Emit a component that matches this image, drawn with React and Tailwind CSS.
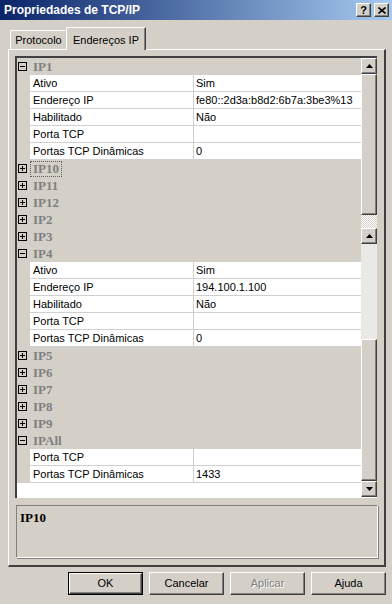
import React from "react";

const raised =
  "bg-[#d4d0c8] border-t border-l border-t-white border-l-white border-b border-r border-b-[#404040] border-r-[#404040] shadow-[inset_-1px_-1px_0_#808080]";

function Arrow({ up }) {
  return (
    <svg width="7" height="4" viewBox="0 0 7 4" className="block">
      {up ? <path d="M3.5 0 L7 4 L0 4 Z" fill="#000" /> : <path d="M0 0 L7 0 L3.5 4 Z" fill="#000" />}
    </svg>
  );
}

function ScrollBtn({ up }) {
  return (
    <div className={`h-[16px] w-[16px] flex items-center justify-center ${raised}`}>
      <Arrow up={up} />
    </div>
  );
}

function Box({ open }) {
  return (
    <div className="relative w-[9px] h-[9px] border border-black ml-[1px]">
      <div className="absolute left-[1px] top-[3px] w-[5px] h-px bg-black" />
      {!open && <div className="absolute left-[3px] top-[1px] w-px h-[5px] bg-black" />}
    </div>
  );
}

function Cat({ label, open, selected }) {
  return (
    <div className="h-[17px] flex items-center bg-[#d4d0c8]">
      <Box open={open} />
      <div
        className={`ml-[3px] h-[16px] flex items-center px-[2px] border ${
          selected ? "border-dotted border-[#606060]" : "border-transparent"
        } font-['Liberation_Serif',serif] font-bold text-[13px] text-[#808080] leading-none`}
      >
        {label}
      </div>
    </div>
  );
}

function Prop({ name, value }) {
  return (
    <div className="h-[17px] flex bg-[#d4d0c8]">
      <div className="w-[13px] shrink-0" />
      <div className="flex-1 flex bg-white border-b border-[#d0d0d0]">
        <div className="w-[164px] shrink-0 border-r border-[#d0d0d0] pl-[3px] flex items-center whitespace-nowrap">
          {name}
        </div>
        <div className="flex-1 pl-[2px] flex items-center whitespace-nowrap overflow-hidden">{value}</div>
      </div>
    </div>
  );
}

const props1 = [
  ["Ativo", "Sim"],
  ["Endereço IP", "fe80::2d3a:b8d2:6b7a:3be3%13"],
  ["Habilitado", "Não"],
  ["Porta TCP", ""],
  ["Portas TCP Dinâmicas", "0"],
];
const props4 = [
  ["Ativo", "Sim"],
  ["Endereço IP", "194.100.1.100"],
  ["Habilitado", "Não"],
  ["Porta TCP", ""],
  ["Portas TCP Dinâmicas", "0"],
];

function Button({ children, def, disabled }) {
  return (
    <div className={`w-[75px] h-[23px] ${def ? "border border-black" : ""}`}>
      <div className={`w-full h-full flex items-center justify-center ${raised}`}>
        <span className={disabled ? "text-[#808080] [text-shadow:1px_1px_0_#fff]" : "text-black"}>{children}</span>
      </div>
    </div>
  );
}

export default function App() {
  const checker =
    "bg-[repeating-conic-gradient(#ffffff_0_25%,#d4d0c8_0_50%)] bg-[length:2px_2px]";
  return (
    <div className="w-[392px] h-[604px] bg-[#d4d0c8] flex flex-col font-['Liberation_Sans',Arial,sans-serif] text-[11px] text-black overflow-hidden">
      {/* title bar */}
      <div className="h-[20px] flex items-center justify-between bg-[linear-gradient(to_right,#0a246a,#a6caf0)] pl-[4px] pr-[3px]">
        <span className="text-white font-bold text-[12px]">Propriedades de TCP/IP</span>
        <div className="flex gap-[3px]">
          <div className={`w-[15px] h-[14px] flex items-center justify-center ${raised} font-bold text-[11px] leading-none`}>?</div>
          <div className={`w-[15px] h-[14px] flex items-center justify-center ${raised}`}>
            <svg width="8" height="7" viewBox="0 0 8 7">
              <path d="M0.5 0.5 L7.5 6.5 M7.5 0.5 L0.5 6.5" stroke="#000" strokeWidth="1.6" />
            </svg>
          </div>
        </div>
      </div>

      {/* tabs */}
      <div className="relative z-10 h-[22px] mt-[7px] flex items-end pl-[10px]">
        <div className="h-[19px] w-[57px] flex items-center justify-center border-t border-l border-white border-r border-r-[#404040] rounded-tl-[2px]">
          Protocolo
        </div>
        <div className="h-[23px] w-[80px] -mb-px -ml-px bg-[#d4d0c8] flex items-start pt-[4px] justify-center border-t border-l border-white border-r border-r-[#404040] shadow-[inset_-1px_0_0_#808080] rounded-tl-[2px]">
          Endereços IP
        </div>
      </div>

      {/* panel */}
      <div className="ml-[8px] w-[378px] h-[518px] border-t border-l border-white border-r-2 border-b-2 border-r-[#404040] border-b-[#404040] flex flex-col">
        <div className="mt-[6px] ml-[6px] w-[362px] h-[442px] border-t-2 border-l-2 border-t-[#404040] border-l-[#404040] bg-white flex">
          <div className="flex-1 flex flex-col">
            <Cat label="IP1" open />
            {props1.map(([n, v]) => (
              <Prop key={"a" + n} name={n} value={v} />
            ))}
            <Cat label="IP10" selected />
            <Cat label="IP11" />
            <Cat label="IP12" />
            <Cat label="IP2" />
            <Cat label="IP3" />
            <Cat label="IP4" open />
            {props4.map(([n, v]) => (
              <Prop key={"b" + n} name={n} value={v} />
            ))}
            <Cat label="IP5" />
            <Cat label="IP6" />
            <Cat label="IP7" />
            <Cat label="IP8" />
            <Cat label="IP9" />
            <Cat label="IPAll" open />
            <Prop name="Porta TCP" value="" />
            <Prop name="Portas TCP Dinâmicas" value="1433" />
          </div>
          <div className="w-[16px] flex flex-col">
            <ScrollBtn up />
            <div className={`h-[141px] ${raised}`} />
            <div className={`h-[13px] ${checker}`} />
            <ScrollBtn up />
            <div className="h-[95px] bg-[#ebe9e5]" />
            <div className={`h-[142px] ${raised}`} />
            <ScrollBtn />
          </div>
        </div>
        <div className="mt-[7px] ml-[7px] w-[362px] h-[53px] border-t border-l border-[#808080] border-b border-r border-b-white border-r-white shadow-[1px_1px_0_#808080] pl-[3px] pt-[2px]">
          <span className="font-['Liberation_Serif',serif] font-bold text-[13px]">IP10</span>
        </div>
      </div>

      {/* buttons */}
      <div className="mt-[5px] flex justify-end gap-[6px] pr-[6px]">
        <Button def>OK</Button>
        <Button>Cancelar</Button>
        <Button disabled>Aplicar</Button>
        <Button>Ajuda</Button>
      </div>
    </div>
  );
}
